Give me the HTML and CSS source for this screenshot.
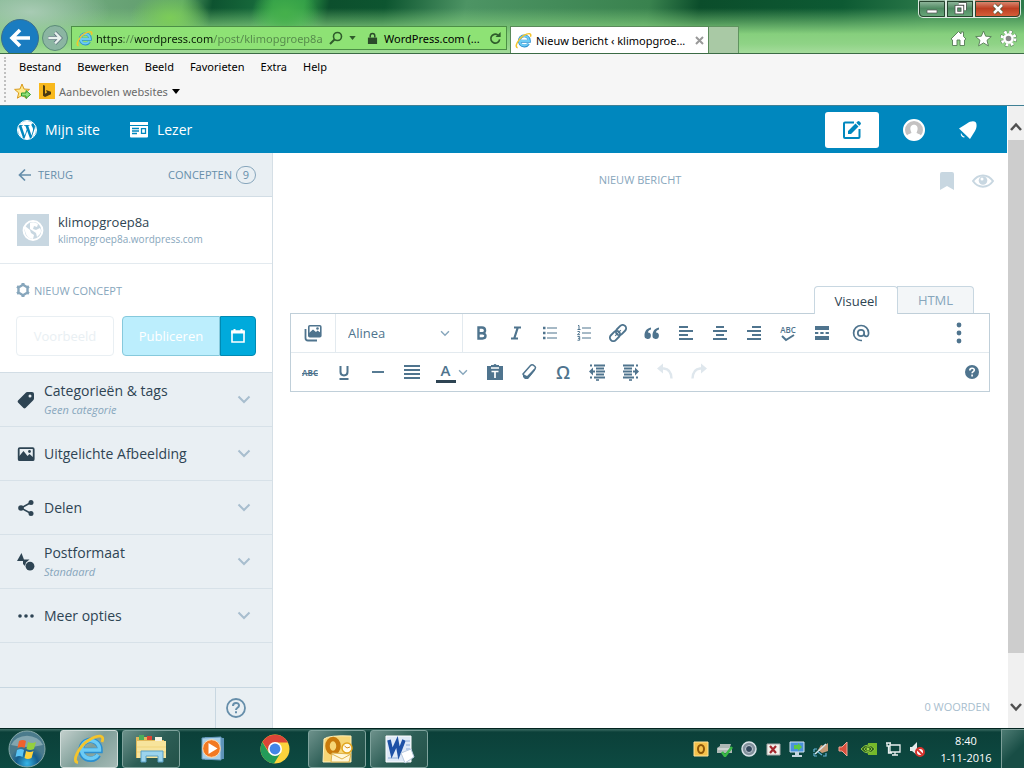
FILE: index.html
```html
<!DOCTYPE html>
<html lang="nl">
<head>
<meta charset="utf-8">
<title>Nieuw bericht ‹ klimopgroep8a</title>
<link rel="stylesheet" href="styles.css">
</head>
<body>
<svg class="sprite" aria-hidden="true">
  <symbol id="chevron" viewBox="0 0 14 9"><path d="M1.5 1.5 7 7l5.500-5.500" fill="none" stroke="currentColor" stroke-width="2"/></symbol>
  <symbol id="ie" viewBox="0 0 32 32">
    <path d="M25.500 22A9.500 9.500 0 1 1 27 16.500v1H9" fill="none" stroke="#2b8fd0" stroke-width="5.500"/>
    <path d="M25 21.500A9 9 0 1 1 26.500 17H9" fill="none" stroke="#6ccbf4" stroke-width="3.500"/>
    <path d="M5 29.500C-2 29 6 13 16 7S32 2 29 9" fill="none" stroke="#f4c42c" stroke-width="2.800"/>
  </symbol>
</svg>

<header class="browser">
  <div class="titlebar">
    <div class="window-controls">
      <button aria-label="Minimaliseren"><svg viewBox="0 0 14 12" width="14" height="12"><path d="M2 7h10v3H2z" fill="#fff" stroke="#555" stroke-width=".7"/></svg></button>
      <button aria-label="Verkleinen"><svg viewBox="0 0 14 14" width="13" height="13"><path d="M5 2h7v7M2.500 5h6.500v6.500H2.500z" fill="none" stroke="#444" stroke-width="3.500"/><path d="M5 2h7v7M2.500 5h6.500v6.500H2.500z" fill="none" stroke="#fff" stroke-width="2"/></svg></button>
      <button class="close" aria-label="Sluiten"><svg viewBox="0 0 14 12" width="14" height="12"><path d="m3 2 8 8m0-8-8 8" stroke="#553" stroke-width="4"/><path d="m3 2 8 8m0-8-8 8" stroke="#fff" stroke-width="2.500"/></svg></button>
    </div>
    <div class="navrow">
      <button class="back" aria-label="Terug"><svg viewBox="0 0 24 24" width="24" height="24"><path d="M22 12H4m8-8-8 8 8 8" fill="none" stroke="#fff" stroke-width="3.600"/></svg></button>
      <button class="forward" aria-label="Vooruit"><svg viewBox="0 0 24 24" width="16" height="16"><path d="M2 12h18m-8-8 8 8-8 8" fill="none" stroke="#567" stroke-width="5.500"/><path d="M2 12h18m-8-8 8 8-8 8" fill="none" stroke="#e8f2ee" stroke-width="3.500"/></svg></button>
      <div class="address">
        <svg width="17" height="17"><use href="#ie"/></svg>
        <input type="text" aria-label="Adres" value="https://wordpress.com/post/klimopgroep8a">
        <button aria-label="Zoeken"><svg viewBox="0 0 14 14" width="14" height="14"><circle cx="8.500" cy="5.500" r="4" fill="none" stroke="#2f5c2b" stroke-width="1.600"/><path d="M5.500 8.500 1 13" stroke="#2f5c2b" stroke-width="2"/></svg></button>
        <svg class="caret" viewBox="0 0 8 5" width="7" height="4"><path d="M0 0h8L4 5z" fill="#2f5c2b"/></svg>
        <svg class="lock" viewBox="0 0 12 14" width="11" height="13"><path d="M1 6h10v7H1z" fill="#2c4a2a"/><path d="M3.500 6V4a2.500 2.500 0 0 1 5 0v2" fill="none" stroke="#2c4a2a" stroke-width="1.600"/></svg>
        <span class="cert">WordPress.com (...</span>
        <button aria-label="Vernieuwen"><svg viewBox="0 0 14 14" width="13" height="13"><path d="M11.500 8A4.800 4.800 0 1 1 9.500 3.200" fill="none" stroke="#2f5c2b" stroke-width="1.800"/><path d="M7 5.500h5.500V0z" fill="#2f5c2b"/></svg></button>
      </div>
      <div class="tab">
        <svg width="17" height="17"><use href="#ie"/></svg>
        <span>Nieuw bericht ‹ klimopgroe...</span>
        <button aria-label="Tabblad sluiten"><svg viewBox="0 0 9 9" width="9" height="9"><path d="m1 1 7 7m0-7L1 8" stroke="#999" stroke-width="2"/></svg></button>
      </div>
      <button class="newtab" aria-label="Nieuw tabblad"></button>
      <div class="tools">
        <button aria-label="Startpagina"><svg viewBox="0 0 17 17" width="17" height="17"><path d="M1 9 8.500 1.500 11 4V2h2.500v4.500L16 9l-1.500 1v5.500H10V10H7v5.500H2.500V10z" fill="#fff" stroke="#557a55" stroke-width=".9"/></svg></button>
        <button aria-label="Favorieten"><svg viewBox="0 0 17 17" width="17" height="17"><path d="m8.500 1 2.200 5.200 5.600.4-4.300 3.700 1.400 5.600-4.900-3-4.900 3L5 10.300.7 6.600l5.600-.4z" fill="#fff" stroke="#557a55" stroke-width=".9"/></svg></button>
        <button aria-label="Extra"><svg viewBox="0 0 17 17" width="17" height="17"><circle cx="8.500" cy="8.500" r="6.500" fill="none" stroke="#557a55" stroke-width="4" stroke-dasharray="3 2.100"/><circle cx="8.500" cy="8.500" r="6.500" fill="none" stroke="#fff" stroke-width="3" stroke-dasharray="2.600 2.500"/><circle cx="8.500" cy="8.500" r="4" fill="#888" stroke="#fff" stroke-width="2.400"/></svg></button>
      </div>
    </div>
  </div>
  <div class="bars">
    <nav class="menubar">
      <button>Bestand</button><button>Bewerken</button><button>Beeld</button><button>Favorieten</button><button>Extra</button><button>Help</button>
    </nav>
    <div class="favbar">
      <button aria-label="Aan favorieten toevoegen"><svg viewBox="0 0 17 17" width="17" height="17"><path d="m8 1 2 5 5.500.4-4.200 3.500 1.300 5.300L8 12.300l-4.600 2.900 1.300-5.300L.6 6.400 6 6z" fill="#ffe98a" stroke="#d99a1c"/><path d="M7.500 10H12V7.500l4.500 4-4.500 4V13H7.500z" fill="#8fe07a" stroke="#2e9a2b"/></svg></button>
      <button class="suggested"><svg viewBox="0 0 16 16" width="16" height="16"><path d="M0 0h16v16H0z" fill="#f8b81c"/><path d="m4 2 2 .8v8l2-1.200-1-2.600 5 1.800v2.400L6 14l-2-1.200z" fill="#4b3a12"/></svg><span>Aanbevolen websites</span><svg viewBox="0 0 8 5" width="8" height="5"><path d="M0 0h8L4 5z"/></svg></button>
    </div>
  </div>
</header>

<div class="viewport">
  <div class="page">
    <header class="masterbar">
      <a href="#" class="mysite"><svg viewBox="0 0 24 24" width="24" height="24" fill="currentColor"><circle cx="12" cy="12" r="9.500" fill="none" stroke="currentColor"/><path d="M12.158 12.786l-2.698 7.840c.806.236 1.657.365 2.540.365 1.047 0 2.050-.18 2.986-.51-.024-.037-.046-.078-.065-.123zM3.008 12c0 3.560 2.070 6.634 5.068 8.092L3.788 8.342c-.5 1.117-.78 2.354-.78 3.658zm15.060-.454c0-1.112-.398-1.880-.74-2.480-.456-.74-.883-1.368-.883-2.110 0-.825.627-1.595 1.510-1.595.04 0 .078.006.116.008-1.598-1.464-3.730-2.360-6.070-2.360-3.140 0-5.904 1.613-7.512 4.053.21.008.41.012.58.012.94 0 2.395-.114 2.395-.114.484-.028.54.684.057.74 0 0-.487.058-1.030.086l3.275 9.740 1.968-5.902-1.400-3.838c-.485-.028-.944-.085-.944-.085-.486-.03-.43-.77.056-.742 0 0 1.484.114 2.368.114.94 0 2.397-.114 2.397-.114.486-.028.543.684.058.74 0 0-.488.058-1.030.086l3.250 9.665.897-2.997c.456-1.170.684-2.137.684-2.907zm1.820-3.860c.04.286.06.593.06.924 0 .912-.17 1.938-.683 3.220l-2.746 7.940c2.672-1.558 4.470-4.454 4.470-7.770 0-1.564-.4-3.033-1.100-4.314z"/></svg><span>Mijn site</span></a>
      <a href="#"><svg viewBox="0 0 20 18" width="20" height="18"><path d="M1 1h18v3H1zM1 5h18v10.500a1 1 0 0 1-1 1H2a1 1 0 0 1-1-1z" fill="#fff"/><path d="M3 7.500h7M3 10h7M3 12.500h5M12.500 7.700h4v4.600h-4z" fill="none" stroke="#0087be" stroke-width="1.300"/></svg><span>Lezer</span></a>
      <div class="account">
        <button class="write" aria-label="Nieuw bericht"><svg viewBox="0 0 22 22" width="22" height="22"><path d="M13 3.500H4a1 1 0 0 0-1 1V18a1 1 0 0 0 1 1h13.500a1 1 0 0 0 1-1V10" fill="none" stroke="#0087be" stroke-width="2"/><path d="m7 12 7.500-7.500 3 3L10 15H7zM15.300 3.700l1.200-1.200q1-1 2 0l1 1q1 1 0 2l-1.200 1.200z" fill="#0087be"/></svg></button>
        <button aria-label="Mijn profiel"><svg viewBox="0 0 22 22" width="22" height="22"><circle cx="11" cy="11" r="10" fill="#c4c2c2" stroke="#fff" stroke-width="2"/><path d="M3.500 18c.5-3 3-3 5-4L7.500 11C6 4 16 4 14.500 11l-1 3c2 1 4.500 1 5 4-4 4-11 4-15 0z" fill="#fff"/></svg></button>
        <button aria-label="Meldingen"><svg viewBox="0 0 20 20" width="20" height="20"><path d="M1 8.500 9 3.500c3-2.500 7-3 8.500-1.500s1.500 6-.5 9l-5 8zM3 13c1 2 2 3 4 4-2 1.500-5-1.500-4-4z" fill="#fff"/></svg></button>
      </div>
    </header>

    <div class="workspace">
      <aside class="sidebar">
        <div class="side-head">
          <a href="#"><svg viewBox="0 0 14 14" width="14" height="14"><path d="M13 7H2m5-5.500L1.500 7 7 12.500" fill="none" stroke="currentColor" stroke-width="1.700"/></svg><span>TERUG</span></a>
          <a href="#" class="drafts"><span>CONCEPTEN</span><span class="count">9</span></a>
        </div>
        <div class="site">
          <svg viewBox="0 0 32 32" width="32" height="32"><path d="M0 0h32v32H0z" fill="#c8d7e1"/><circle cx="16" cy="16.500" r="9.400" fill="#c8d7e1" stroke="#fff" stroke-width="2"/><path d="M8 12l5 4 1 3 3 2-1 4q-7-1-8-8zM13 9q4-2 8 1l-1 3-3-1-1 3 3 1 4-2q2 3 0 6l-3 3-1-4-3-2-3-2z" fill="#fff"/></svg>
          <div><strong>klimopgroep8a</strong><a href="#">klimopgroep8a.wordpress.com</a></div>
        </div>
        <div class="publish">
          <div class="status"><svg viewBox="0 0 14 14" width="14" height="14"><path d="M7 1.800 11.500 4.400v5.200L7 12.200 2.500 9.600V4.400z" fill="#fff" stroke="#87a6bc" stroke-width="2.400"/><path d="M7 0v2M1 3.500l2 1M13 3.500l-2 1M1 10.500l2-1M13 10.500l-2-1M7 12v2" stroke="#87a6bc" stroke-width="3"/></svg><span>NIEUW CONCEPT</span></div>
          <div class="actions">
            <button class="preview" disabled>Voorbeeld</button>
            <div class="split"><button class="primary" disabled>Publiceren</button><button class="schedule" aria-label="Plannen"><svg viewBox="0 0 16 16" width="16" height="16"><path d="M2 4h12v10H2z" fill="none" stroke="#fff" stroke-width="1.600"/><path d="M1.200 2.200h13.600v3.300H1.200zM3.500 1h2v2h-2zM10.500 1h2v2h-2z" fill="#fff"/></svg></button></div>
          </div>
        </div>
        <button class="accordion"><svg viewBox="0 0 18 18" width="18" height="18"><path fill-rule="evenodd" d="M1 9.500 8.500 2q.7-1 2-1H15q2 0 2 2v4.500q0 1-1 2L8.500 17q-1 .8-2 0L1 11.500q-.8-1 0-2zM13 3.500a1.500 1.500 0 1 0 0 3 1.500 1.500 0 0 0 0-3z" fill="#2e4453"/></svg><span><b>Categorieën &amp; tags</b><i>Geen categorie</i></span><svg class="chev"><use href="#chevron"/></svg></button>
        <button class="accordion"><svg viewBox="0 0 18 18" width="18" height="18"><rect x="1.700" y="3.200" width="15" height="12" rx="1" fill="none" stroke="#2e4453" stroke-width="1.800"/><path d="m1.500 12 5-6 4 5 2-2 4.500 4v2H2z" fill="#2e4453"/><circle cx="12.500" cy="6.500" r="1.400" fill="#2e4453"/></svg><span><b>Uitgelichte Afbeelding</b></span><svg class="chev"><use href="#chevron"/></svg></button>
        <button class="accordion"><svg viewBox="0 0 18 18" width="18" height="18"><path d="M14 3.500 4 9l10 5.500" fill="none" stroke="#2e4453" stroke-width="1.500"/><circle cx="14" cy="3.500" r="2.500" fill="#2e4453"/><circle cx="4" cy="9" r="2.800" fill="#2e4453"/><circle cx="14" cy="14.500" r="2.500" fill="#2e4453"/></svg><span><b>Delen</b></span><svg class="chev"><use href="#chevron"/></svg></button>
        <button class="accordion"><svg viewBox="0 0 18 18" width="18" height="18"><path d="m4.500 0 3 8H0zM6 6.500h6.500L9 9.500 8 13l-2-2z" fill="#2e4453"/><circle cx="13" cy="13.200" r="4.400" fill="#2e4453"/></svg><span><b>Postformaat</b><i>Standaard</i></span><svg class="chev"><use href="#chevron"/></svg></button>
        <button class="accordion"><svg viewBox="0 0 18 18" width="18" height="18" fill="#2e4453"><circle cx="3" cy="9" r="1.800"/><circle cx="9" cy="9" r="1.800"/><circle cx="15" cy="9" r="1.800"/></svg><span><b>Meer opties</b></span><svg class="chev"><use href="#chevron"/></svg></button>
        <div class="side-foot"><button aria-label="Hulp"><svg viewBox="0 0 20 20" width="20" height="20"><circle cx="10" cy="10" r="9" fill="none" stroke="#668eaa" stroke-width="1.800"/><path d="M7 8c0-4 6-4 6-.5 0 2.500-3 2-3 4.500M10 13.300v2" fill="none" stroke="#668eaa" stroke-width="2"/></svg></button></div>
      </aside>

      <main class="editor">
        <div class="ground">
          <h1>NIEUW BERICHT</h1>
          <div class="ground-tools">
            <button aria-label="Bladwijzer"><svg viewBox="0 0 16 20" width="16" height="20"><path d="M1 3q0-2 2-2h10q2 0 2 2v16l-7-4-7 4z" fill="#c8d7e1"/></svg></button>
            <button aria-label="Voorbeeld"><svg viewBox="0 0 22 14" width="22" height="14"><path d="M1 7C6-.5 16-.5 21 7 16 14.500 6 14.500 1 7z" fill="none" stroke="#c8d7e1" stroke-width="2"/><circle cx="11" cy="6.500" r="4.300" fill="#c8d7e1"/><circle cx="10" cy="5" r="1.500" fill="#fff"/></svg></button>
          </div>
        </div>
        <input class="title" type="text" aria-label="Titel">
        <div class="modes"><button class="active">Visueel</button><button>HTML</button></div>
        <div class="toolbar">
          <div class="row">
            <button class="media" aria-label="Media"><svg viewBox="0 0 18 18" width="18" height="18"><path d="M1.500 5v9q0 2.500 2.500 2.500h9" fill="none" stroke="currentColor" stroke-width="1.800"/><rect x="4.800" y="1.800" width="12" height="11" rx="1" fill="none" stroke="currentColor" stroke-width="1.600"/><path d="m5 9 4-3.500L12 8l1.500-1.500L17 9v4H5z" fill="currentColor"/><circle cx="13.500" cy="4.500" r="1.300" fill="currentColor"/></svg></button>
            <label class="format"><select aria-label="Opmaak"><option>Alinea</option></select><svg width="10" height="7"><use href="#chevron"/></svg></label>
            <div class="group">
            <button aria-label="Vet"><svg viewBox="0 0 18 18" width="18" height="18"><path d="M5.500 3.500v11h4c4 0 4-5.300 0-5.300 3.500 0 3.500-5.700-.5-5.700zm0 5.700h4" fill="none" stroke="currentColor" stroke-width="2.400"/></svg></button>
            <button aria-label="Cursief"><svg viewBox="0 0 18 18" width="18" height="18"><path d="M7 3.500h7M4 14.500h7M10.800 3.500l-3.600 11" fill="none" stroke="currentColor" stroke-width="2.200"/></svg></button>
            <button aria-label="Opsomming"><svg viewBox="0 0 18 18" width="18" height="18"><path d="M6 4h10M6 9h10M6 14h10" stroke="currentColor" stroke-width="1.200"/><path d="M2 2.700h2.500v2.500H2zM2 7.700h2.500v2.500H2zM2 12.700h2.500v2.500H2z" fill="currentColor"/></svg></button>
            <button aria-label="Genummerde lijst"><svg viewBox="0 0 18 18" width="18" height="18"><path d="M7 4h9M7 9h9M7 14h9M3 1.500h1v4M2.500 5.500h3M2.500 7.500h2v1.200l-2 2h2.500M2.500 12.500h2.200v3.700H2.500M3 14.300h1.500" fill="none" stroke="currentColor" stroke-width="1"/></svg></button>
            <button aria-label="Koppeling"><svg viewBox="0 0 18 18" width="18" height="18"><g transform="rotate(-45 9 9)" fill="none" stroke="currentColor" stroke-width="1.900"><rect x="-1" y="5.600" width="11.500" height="6.800" rx="3.400"/><rect x="7.500" y="5.600" width="11.500" height="6.800" rx="3.400"/><path d="M5 9h8" stroke-width="1.200"/></g></svg></button>
            <button aria-label="Citaat"><svg viewBox="0 0 18 18" width="18" height="18"><path d="M8 3.500C3 4.500 1.500 8 1.500 11.500a3.200 3.200 0 1 0 3.500-3C5 7 6 6 8 5.500zM16 3.500c-5 1-6.500 4.500-6.500 8a3.200 3.200 0 1 0 3.500-3c0-1.500 1-2.500 3-3z" fill="currentColor"/></svg></button>
            <button aria-label="Links uitlijnen"><svg viewBox="0 0 18 18" width="18" height="18"><path d="M2 3h9M2 7h14M2 11h9M2 15h14" stroke="currentColor" stroke-width="1.900"/></svg></button>
            <button aria-label="Centreren"><svg viewBox="0 0 18 18" width="18" height="18"><path d="M5 3h8M2 7h14M5 11h8M2 15h14" stroke="currentColor" stroke-width="1.900"/></svg></button>
            <button aria-label="Rechts uitlijnen"><svg viewBox="0 0 18 18" width="18" height="18"><path d="M7 3h9M2 7h14M7 11h9M2 15h14" stroke="currentColor" stroke-width="1.900"/></svg></button>
            <button class="spell" aria-label="Spelling"><span>ABC</span><svg viewBox="0 0 14 8" width="14" height="8"><path d="m1 2 4 4 8-5" fill="none" stroke="currentColor" stroke-width="2"/></svg></button>
            <button aria-label="Lees meer"><svg viewBox="0 0 18 18" width="18" height="18"><path d="M2 4h14M2 14h14" stroke="currentColor" stroke-width="4"/><path d="M2 9h14" stroke="currentColor" stroke-width="1.800" stroke-dasharray="3.300 2"/></svg></button>
            <button class="mention" aria-label="Vermelding"><svg viewBox="0 0 18 18" width="18" height="18"><path d="M10 16.500H9A7.500 7.500 0 1 1 16.600 9c0 5-4.600 4-4.600.5" fill="none" stroke="currentColor" stroke-width="1.700"/><circle cx="9" cy="9" r="3.200" fill="none" stroke="currentColor" stroke-width="1.700"/></svg></button>
            </div>
            <button class="last dots" aria-label="Werkbalk wisselen"><svg viewBox="0 0 6 22" width="6" height="22" fill="currentColor"><circle cx="3" cy="3" r="2.400"/><circle cx="3" cy="11" r="2.400"/><circle cx="3" cy="19" r="2.400"/></svg></button>
          </div>
          <div class="row second">
            <button class="strike" aria-label="Doorhalen"><s>ABC</s></button>
            <button aria-label="Onderstrepen"><svg viewBox="0 0 18 18" width="18" height="18"><path d="M5.500 3v6c0 4.500 7 4.500 7 0V3M4.500 16h9" fill="none" stroke="currentColor" stroke-width="2"/></svg></button>
            <button aria-label="Horizontale lijn"><svg viewBox="0 0 18 18" width="18" height="18"><path d="M3 9h12" stroke="currentColor" stroke-width="1.900"/></svg></button>
            <button aria-label="Uitvullen"><svg viewBox="0 0 18 18" width="18" height="18"><path d="M1 3h16M1 7h16M1 11h16M1 15h16" stroke="currentColor" stroke-width="1.900"/></svg></button>
            <button class="color" aria-label="Tekstkleur"><span>A</span><svg width="10" height="7"><use href="#chevron"/></svg></button>
            <button aria-label="Plakken als tekst"><svg viewBox="0 0 18 18" width="18" height="18"><path d="M1 3h4V2h2.500a1.600 1.600 0 0 1 3 0H13v1h4v14H1z" fill="currentColor"/><path d="M5 5h8M5.500 8.500h7M9 8.500V15" stroke="#fff" stroke-width="1.700"/></svg></button>
            <button aria-label="Opmaak wissen"><svg viewBox="0 0 18 18" width="18" height="18"><path d="m3 11 7.500-8.500q1-1 2.500-.5l2 1.500q1 1 0 2.500L8 14.500H5z" fill="none" stroke="currentColor" stroke-width="1.500"/><path d="m3 11 4 2 7.500-7.500.5 2L8 16H5l-2-2z" fill="currentColor"/></svg></button>
            <button class="omega" aria-label="Speciale tekens">Ω</button>
            <button aria-label="Inspringing verkleinen"><svg viewBox="0 0 18 18" width="18" height="18"><path d="M2 2.500h2M6 2.500h11M8 5.500h8M8 8.500h9M8 11.500h8M2 14.500h2M6 14.500h11" stroke="currentColor" stroke-width="1.900"/><path d="M8 17h3" stroke="currentColor" stroke-width="1.600"/><path d="m1 8.500 4-4v3h2v2H5v3z" fill="currentColor"/></svg></button>
            <button aria-label="Inspringing vergroten"><svg viewBox="0 0 18 18" width="18" height="18"><path d="M14 2.500h2M1 2.500h11M2 5.500h8M1 8.500h9M2 11.500h8M14 14.500h2M1 14.500h11" stroke="currentColor" stroke-width="1.900"/><path d="M7 17h3" stroke="currentColor" stroke-width="1.600"/><path d="m17 8.500-4-4v3h-2v2h2v3z" fill="currentColor"/></svg></button>
            <button disabled aria-label="Ongedaan maken"><svg viewBox="0 0 18 18" width="18" height="18"><path d="M4 5.500h4q7 .5 7.500 10" fill="none" stroke="currentColor" stroke-width="2.400"/><path d="m1 5.500 6-5v10z" fill="currentColor"/></svg></button>
            <button disabled aria-label="Opnieuw"><svg viewBox="0 0 18 18" width="18" height="18"><path d="M14 5.500h-4q-7 .5-7.500 10" fill="none" stroke="currentColor" stroke-width="2.400"/><path d="m17 5.500-6-5v10z" fill="currentColor"/></svg></button>
            <button class="last" aria-label="Sneltoetsen"><svg viewBox="0 0 16 16" width="16" height="16"><circle cx="8" cy="8" r="7" fill="currentColor"/><path d="M5.800 6.500c0-3 4.500-3 4.500-.5 0 1.800-2.200 1.500-2.200 3.300M8.100 10.600v1.800" fill="none" stroke="#fff" stroke-width="1.600"/></svg></button>
          </div>
        </div>
        <textarea class="content" aria-label="Berichttekst"></textarea>
        <p class="words">0 WOORDEN</p>
      </main>
    </div>
  </div>
  <div class="scrollbar">
    <svg viewBox="0 0 12 10" width="12" height="10"><path d="m1 8 5-5.500L11 8" fill="none" stroke="#505050" stroke-width="2.500"/></svg>
    <div class="thumb"></div>
    <svg viewBox="0 0 12 10" width="12" height="10"><path d="m1 2 5 5.500L11 2" fill="none" stroke="#505050" stroke-width="2.500"/></svg>
  </div>
</div>

<footer class="taskbar">
  <button class="start" aria-label="Start"><svg viewBox="0 0 38 38" width="38" height="38"><defs><radialGradient id="orb" cy=".9"><stop stop-color="#36b6e8"/><stop offset=".6" stop-color="#165d8c"/><stop offset="1" stop-color="#4b7b8c"/></radialGradient></defs><circle cx="19" cy="19" r="18" fill="url(#orb)" stroke="#88aaa9"/><path d="M3 15a17 14 0 0 1 32 0q-16 4-32 0z" fill="#c5d9d9" opacity=".45"/><path d="M11 11q4-2 7 0l-1.500 7q-3-2-7 0z" fill="#f0622d"/><path d="M20 12q4 2 8 0l-2 7q-4 2-7.500 0z" fill="#94cf3f"/><path d="M9 20q4-2 7 0l-1.500 7q-3-2-7 0z" fill="#5ac4f6"/><path d="M18 21q4 2 7.500 0l-2 7q-4 2-7 0z" fill="#ffd23b"/></svg></button>
  <div class="apps">
    <button class="open current" aria-label="Internet Explorer"><svg width="32" height="32"><use href="#ie"/></svg></button>
    <button class="open" aria-label="Verkenner"><svg viewBox="0 0 34 32" width="34" height="32"><path d="M2 4h12l2 3h14v18H2z" fill="#e2b95a"/><path d="M5 2h5v5H5z" fill="#4cae5b"/><path d="M13 3h5v4h-5z" fill="#dc4432"/><path d="M21 4h7v4h-7z" fill="#f7f3df"/><path d="M3 8h29v17H3z" fill="#f7e49c"/><path d="M3 14h29M3 19h29" stroke="#efd47c"/><path d="M7 29V18h22v11h-5v-6H12v6z" fill="#9cd4ed" stroke="#5a9fc4"/></svg></button>
    <button aria-label="Mediaspeler"><svg viewBox="0 0 30 30" width="30" height="30"><path d="m7 3 19 1v21l-19 1z" fill="#5d93b7"/><path d="m4 4 19-1v23L4 25z" fill="#a9d0e9" stroke="#6498bd"/><circle cx="13.500" cy="14.500" r="8.800" fill="#f27922" stroke="#ffdbb0"/><path d="m10.500 9 9 5.500-9 5.500z" fill="#fff"/></svg></button>
    <button aria-label="Chrome"><svg viewBox="0 0 30 30" width="30" height="30"><circle cx="15" cy="15" r="14.500" fill="#fbd33c"/><path d="M2.500 8A14.500 14.500 0 0 1 28 8.500H15L9 18z" fill="#db4437"/><path d="M2.300 8A14.500 14.500 0 0 0 14 29.500l6.500-10.500H9z" fill="#239b59"/><circle cx="15" cy="15" r="7" fill="#fff"/><circle cx="15" cy="15" r="5.400" fill="#4285e8"/></svg></button>
    <button class="open" aria-label="Outlook"><svg viewBox="0 0 32 30" width="32" height="30"><path d="M3 5q5-4 27-3v26H2z" fill="#f7d676" stroke="#fff0ba"/><ellipse cx="12" cy="12" rx="5.500" ry="7" fill="none" stroke="#c87a0b" stroke-width="4.500"/><path d="m11 19 19 1-2 8H10z" fill="#fff7d9" stroke="#deb34c"/><path d="m11 20 10 5 9-5" fill="none" stroke="#deb34c"/><circle cx="26" cy="14" r="5" fill="#fffbea" stroke="#e2a51c" stroke-width="1.500"/><path d="m23.500 12 2.500 2 3-1" fill="none" stroke="#d98b16"/></svg></button>
    <button class="open" aria-label="Word"><svg viewBox="0 0 32 30" width="32" height="30"><path d="M3 2h25v26H3z" fill="#dfe9f7" stroke="#fff"/><path d="M23 7h4M23 11h4M23 15h4M5 24h10" stroke="#8aaad8"/><path d="m6 6 3 13 5-11 2 11 5-13" fill="none" stroke="#1e51a6" stroke-width="3.600"/><path d="m18 19 10-4 3 8-9 6z" fill="#fff" stroke="#b8c9df"/></svg></button>
  </div>
  <div class="tray">
    <svg viewBox="0 0 16 16"><path d="M1 1h14v14H1z" fill="#f6c24b" stroke="#ffe49b"/><ellipse cx="8" cy="8" rx="3" ry="4" fill="none" stroke="#8d5607" stroke-width="2"/></svg>
    <svg viewBox="0 0 16 16"><path d="M3 3h11l-1 3h2v6H0V7l3-2z" fill="#aeb8b5"/><path d="M1 8h12" stroke="#eee"/><path d="m5 11 3 4 7-9" fill="none" stroke="#39b846" stroke-width="2.600"/></svg>
    <svg viewBox="0 0 16 16"><circle cx="8" cy="8" r="7" fill="#82919c" stroke="#d9e3e8" stroke-width="1.500"/><circle cx="8" cy="8" r="3.500" fill="#34495d" stroke="#c1ccd5"/></svg>
    <svg viewBox="0 0 16 16"><path d="M2 3h13v11H2z" fill="#f2f0e9" stroke="#aaa"/><path d="m5 5 6 7m0-7-6 7" stroke="#a3282e" stroke-width="2.200"/></svg>
    <svg viewBox="0 0 16 16"><path d="M1 1h14v10H1z" fill="#4b92db" stroke="#d2e3f2"/><path d="M6 11h4v3H6zM3 14h10v2H3z" fill="#c5d5df"/><path d="M5 4h4V2l4 4-4 4V8H5z" fill="#5bc944"/></svg>
    <svg viewBox="0 0 16 16"><path d="m5 9 3-5 3 1 4-3v8l-6 2z" fill="#c59b79"/><path d="M2 13 13 3" stroke="#dce8ee" stroke-width="1.500"/><path d="M1 8h3M1 8v3M1 15h3M1 15v-3M10 15h3v-3M5 11l4 3" fill="none" stroke="#65b2d5" stroke-width="1.200"/></svg>
    <svg viewBox="0 0 16 16"><path d="M2 6h3l5-5v14l-5-5H2z" fill="#d9503e" stroke="#f0a695"/></svg>
    <svg viewBox="0 0 16 16"><path d="M7 2h9v12H7z" fill="#76b82a"/><path d="M0 8q7-8 14 0Q7 16 0 8zm3 0q5-5 8 0-4 5-8 0z" fill="#2d5c1a" stroke="#8dc943"/><circle cx="7" cy="8" r="1.500" fill="#9ddd45"/></svg>
    <svg viewBox="0 0 16 16"><path d="M5 4h10v7H5zM7 14h6M10 11v3M2 2v3h3V2M3.500 5v7H7M1 2h5" fill="none" stroke="#e9f0ef" stroke-width="1.300"/></svg>
    <svg viewBox="0 0 16 16"><path d="M1 6h2l5-5v13l-5-4H1z" fill="#e4eaea"/><circle cx="11" cy="11" r="4" fill="#fff" stroke="#d5332d" stroke-width="2"/><path d="m8 8 6 6" stroke="#d5332d" stroke-width="2"/></svg>
  </div>
  <time class="clock"><span>8:40</span><span>1-11-2016</span></time>
  <button class="desktop" aria-label="Bureaublad weergeven"></button>
</footer>
</body>
</html>
```

FILE: styles.css
```css
* { box-sizing: border-box; }
body {
  margin: 0;
  height: 100vh;
  display: flex;
  flex-direction: column;
  overflow: hidden;
  font-family: "Open Sans", "Noto Sans", sans-serif;
  font-size: 12px;
  color: #2e4453;
  background: #fff;
}
button, input, select, textarea {
  font: inherit;
  color: inherit;
  background: none;
  border: 0;
  padding: 0;
  margin: 0;
  outline: 0;
}
button { display: flex; align-items: center; justify-content: center; flex: none; }
a { color: inherit; text-decoration: none; }
svg { flex: none; display: block; }
.sprite { position: absolute; width: 0; height: 0; }

/* Browser frame */
.browser { flex: none; font-family: "Noto Sans", "Open Sans", sans-serif; font-size: 11px; color: #000; }
.titlebar {
  height: 54px;
  overflow: hidden;
  border-bottom: 1px solid #3b6b45;
  background:
    radial-gradient(ellipse 80px 34px at 30px 12px, #a8cbb4, transparent),
    radial-gradient(ellipse 40px 26px at 170px 18px, #7ccc58, transparent),
    radial-gradient(ellipse 34px 26px at 285px 14px, #45b04b, transparent),
    linear-gradient(to bottom, transparent 8px, #86cf7d 34px, #8fd386 44px, #a5dc9c),
    linear-gradient(100deg, #7db48c 0, #66a173 130px, #5da566 180px, #0d5330 210px, #16673a 250px, #2f9c47 270px, #2f9c47 300px, #0c4f2d 325px, #0d5530 380px, #4d9464 460px, #39824e 640px, #0b4d2b 690px, #0d5a33 830px, #2c7a4a 920px);
}
.window-controls { display: flex; justify-content: flex-end; height: 18px; padding-right: 3px; }
.window-controls button {
  width: 28px;
  border: 1px solid #dbe9df;
  border-top: 0;
  background: linear-gradient(#9fc0a9, #4f8a62 50%, #6aa97a);
  outline: 1px solid #27452f;
  outline-offset: -2px;
}
.window-controls button:first-child { border-radius: 0 0 0 5px; }
.window-controls .close { width: 47px; border-radius: 0 0 5px 0; background: linear-gradient(#e09c86, #bd3f22 50%, #d9623c); }
.navrow { display: flex; align-items: center; height: 40px; }
.back { width: 38px; height: 38px; margin-left: 1px; border-radius: 50%; background: #1a7cc0; border: 1px solid #3c6f8c; }
.forward { width: 26px; height: 26px; margin: 0 3px; border-radius: 50%; border: 1px solid #5b8b78; background: #8bb5a2; }
.address {
  display: flex;
  align-items: center;
  width: 436px;
  height: 24px;
  padding: 0 4px;
  border: 1px solid #4c8f46;
  background: #8ee275;
}
.address input {
  flex: 1;
  min-width: 0;
  margin-left: 3px;
  height: 20px;
  -webkit-text-fill-color: transparent;
  background: linear-gradient(to right, #0a1c08 28px, #54874a 28px, #54874a 39px, #0a1c08 39px, #0a1c08 117px, #54874a 117px);
  background-clip: text;
  -webkit-background-clip: text;
}
.address .caret { margin: 0 11px 0 6px; }
.address .lock { margin-right: 6px; }
.cert { width: 105px; white-space: nowrap; }
.tab {
  display: flex;
  align-items: center;
  width: 199px;
  height: 28px;
  margin: 0 0 4px 3px;
  padding: 0 4px;
  gap: 4px;
  align-self: flex-end;
  border: 1px solid #5a8a5a;
  border-bottom: 0;
  background: #fff;
  white-space: nowrap;
}
.tab span { flex: 1; }
.newtab { width: 30px; height: 28px; margin-bottom: 4px; align-self: flex-end; background: #a9c9a5; border: 1px solid #5f945f; border-width: 1px 1px 0 0; }
.tools { display: flex; gap: 8px; margin-left: auto; padding-right: 7px; }
.bars { position: relative; padding-left: 14px; background: #f6f6f6; border-bottom: 1px solid #3f8095; }
.bars::before { content: ""; position: absolute; left: 4px; top: 3px; bottom: 3px; border-left: 2px dotted #c0c0c0; }
.menubar { display: flex; height: 24px; gap: 16px; padding-left: 5px; }
.favbar { display: flex; align-items: center; height: 27px; padding-bottom: 1px; gap: 8px; }
.suggested { gap: 4px; color: #6a6a6a; }

/* Page and scrollbar */
.viewport { flex: 1; min-height: 0; display: flex; }
.page { flex: 1; min-width: 0; display: flex; flex-direction: column; }
.scrollbar { flex: none; width: 17px; display: flex; flex-direction: column; align-items: center; padding: 16px 0; background: #f0f0f0; border-left: 1px solid #fff; }
.thumb { flex: none; width: 16px; height: 87%; margin: 8px 0 auto; background: #cdcdcd; }

.masterbar { flex: none; display: flex; align-items: center; height: 47px; padding: 0 12px 0 15px; background: #0087be; color: #fff; font-size: 14px; }
.masterbar a { display: flex; align-items: center; gap: 8px; }
.masterbar .mysite { gap: 6px; margin-right: 29px; }
.account { display: flex; align-items: center; margin-left: auto; }
.account button { width: 54px; height: 36px; }
.account .write { background: #fff; border-radius: 3px; margin-right: 8px; }
.workspace { flex: 1; min-height: 0; display: flex; }

/* Sidebar */
.sidebar { flex: none; width: 273px; display: flex; flex-direction: column; background: #e9eff3; border-right: 1px solid #d5dfe6; }
.side-head { display: flex; justify-content: space-between; align-items: center; height: 44px; padding: 0 16px 0 18px; border-bottom: 1px solid #d2dde5; font-size: 11px; color: #668eaa; }
.side-head a { display: flex; align-items: center; gap: 6px; }
.side-head .drafts { gap: 4px; }
.count { width: 20px; height: 18px; border: 1px solid #87a6bc; border-radius: 9px; text-align: center; line-height: 16px; }
.site { display: flex; align-items: center; gap: 9px; height: 67px; padding: 0 17px; background: #fff; border-bottom: 1px solid #e3eaef; }
.site div { display: flex; flex-direction: column; }
.site strong { font-size: 13px; line-height: 18px; font-weight: 400; }
.site a { font-size: 10px; line-height: 16px; color: #87a6bc; }
.publish { padding: 16px; height: 109px; background: #fff; border-bottom: 1px solid #d2dde5; }
.status { display: flex; align-items: center; gap: 4px; height: 20px; margin-bottom: 16px; color: #87a6bc; font-size: 11px; }
.actions { display: flex; gap: 8px; height: 40px; }
.actions button { height: 40px; border-radius: 4px; font-size: 13px; font-weight: 600; }
.actions .preview { width: 98px; border: 1px solid #e9eff3; color: #e9eff3; font-weight: 400; }
.split { display: flex; flex: 1; }
.split .primary { flex: 1; background: #bceefd; border: 1px solid #86c9dc; color: #fff; border-radius: 4px 0 0 4px; font-weight: 400; }
.split .schedule { width: 36px; background: #00aadc; border: 1px solid #008ab3; border-radius: 0 4px 4px 0; }
.accordion { height: 54px; padding: 0 21px 0 17px; gap: 9px; border-bottom: 1px solid #d7e1e8; text-align: left; }
.accordion span { flex: 1; display: flex; flex-direction: column; }
.accordion b { font-size: 14px; font-weight: 400; line-height: 20px; }
.accordion i { font-size: 11px; line-height: 17px; color: #87a6bc; }
.chev { width: 14px; height: 9px; color: #a8bece; }
.side-foot { display: flex; justify-content: flex-end; height: 41px; margin-top: auto; border-top: 1px solid #c8d7e1; }
.side-foot button { width: 57px; padding-right: 16px; border-left: 1px solid #c8d7e1; }

/* Editor */
.editor { flex: 1; min-width: 0; display: flex; flex-direction: column; padding: 0 17px; background: #fff; }
.ground { flex: none; display: grid; grid-template-columns: 1fr auto 1fr; align-items: center; height: 52px; }
.ground h1 { grid-column: 2; margin: 0; font-size: 11px; font-weight: 400; color: #87a6bc; }
.ground-tools { display: flex; align-items: center; justify-content: flex-end; gap: 17px; padding-top: 4px; margin-right: -4px; }
.title { flex: none; height: 81px; font-size: 24px; }
.modes { flex: none; display: flex; justify-content: flex-end; height: 27px; padding-right: 16px; position: relative; z-index: 1; }
.modes button { width: 77px; height: 27px; border: 1px solid #c8d7e1; border-bottom: 0; border-radius: 0 4px 0 0; background: #f3f6f8; color: #87a6bc; font-size: 13px; }
.modes .active { width: 84px; height: 28px; margin-right: -1px; background: #fff; color: #2e4453; border-radius: 4px 4px 0 0; }
.toolbar { flex: none; border: 1px solid #c0cfd9; color: #4f748e; }
.row { display: flex; height: 39px; border-bottom: 1px solid #e3eaef; }
.row button { width: 34px; }
.row .media { width: 45px; border-right: 1px solid #e3eaef; }
.row .last { margin-left: auto; }
.row .dots { width: 60px; }
.format { display: flex; align-items: center; width: 127px; padding: 0 12px; border-right: 1px solid #e3eaef; font-size: 13px; }
.format select { flex: 1; appearance: none; }
.format svg, .color svg { color: #87a6bc; }
.group { display: flex; padding-left: 2px; }
.spell { flex-direction: column; font-size: 8px; font-weight: 600; line-height: 9px; }
.group .mention { margin-left: 5px; }
.second { padding-left: 2px; height: 38px; border-bottom: 0; }
.strike { font-size: 8px; font-weight: 700; }
.row .color { width: 49px; padding-right: 4px; gap: 2px; }
.color span { width: 20px; border-bottom: 3px solid #2e4453; font-size: 15px; line-height: 19px; font-weight: 600; }
.omega { font-size: 18px; font-weight: 600; }
.second button:disabled { color: #dfe7ed; }
.content { flex: 1; resize: none; }
.words { flex: none; margin: 0; height: 30px; text-align: right; font-size: 11px; color: #a8bece; line-height: 18px; }

/* Taskbar */
.taskbar { flex: none; display: flex; align-items: center; height: 40px; border-top: 1px solid #032420; background: linear-gradient(#3f6f66, #0b4039 3px, #0d4a42); color: #fff; }
.start { width: 54px; }
.apps { display: flex; gap: 4px; padding-left: 6px; }
.apps button { width: 58px; height: 38px; border-radius: 3px; }
.apps .open { border: 1px solid #7fa39d; background: linear-gradient(135deg, #6d918b, #2d5e56 50%, #235249); }
.apps .current { border-color: #cfdcd9; background: linear-gradient(135deg, #c2cfcc, #7f9f99 50%, #a5bab6); }
.tray { display: flex; gap: 8px; margin-left: auto; }
.tray svg { width: 16px; height: 16px; }
.clock { display: flex; flex-direction: column; align-items: center; width: 76px; padding-left: 6px; line-height: 17px; font-size: 11px; }
.desktop { width: 23px; height: 39px; border: 1px solid #7d9f99; border-width: 1px 0 0 1px; background: linear-gradient(135deg, #4d7b73, #184d45 60%); }
```
